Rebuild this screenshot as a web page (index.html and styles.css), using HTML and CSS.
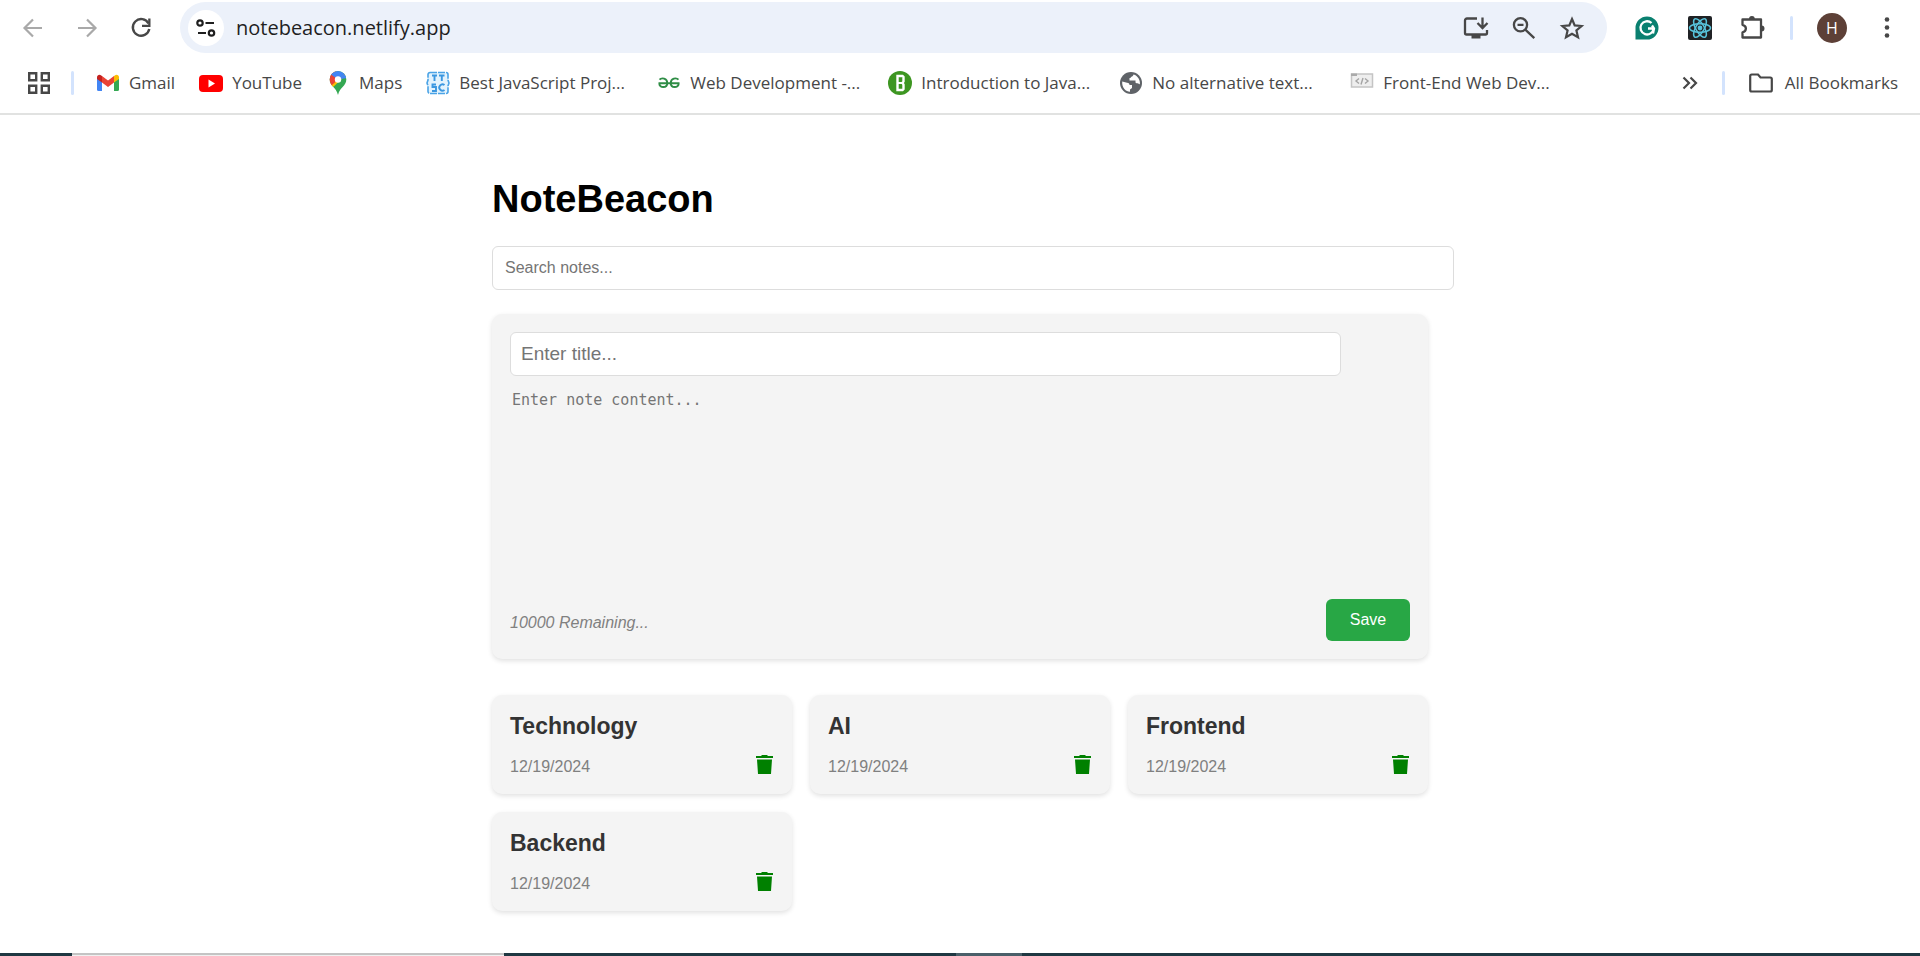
FILE: index.html
```html
<!DOCTYPE html>
<html lang="en">
<head>
<meta charset="utf-8">
<title>NoteBeacon</title>
<link rel="stylesheet" href="styles.css">
</head>
<body>
<header class="browser">
  <div class="toolbar">
    <nav class="nav-buttons" aria-label="Navigation">
      <button class="icon-btn icon-btn-muted" aria-label="Back"><svg class="icon-24" viewBox="0 0 24 24"><path d="M21 12H4M12 3.500L3.500 12l8.500 8.500" fill="none" stroke="currentColor" stroke-width="2.200"/></svg></button>
      <button class="icon-btn icon-btn-muted" aria-label="Forward"><svg class="icon-24" viewBox="0 0 24 24"><path d="M3 12h17M12 3.500l8.500 8.500-8.500 8.500" fill="none" stroke="currentColor" stroke-width="2.200"/></svg></button>
      <button class="icon-btn" aria-label="Reload"><svg class="icon-24" viewBox="0 0 24 24"><path d="M19.500 7.500A8.300 8.300 0 1 0 20.300 13" fill="none" stroke="currentColor" stroke-width="2.400"/><path d="M21.500 2.500v8.500H13v-2.300h6.200V2.500z" fill="currentColor"/></svg></button>
    </nav>
    <div class="omnibox">
      <button class="site-info" aria-label="Site information"><svg class="icon-24" viewBox="0 0 24 24"><g fill="none" stroke="currentColor" stroke-width="2.200"><circle cx="6" cy="7" r="2.700"/><path d="M11.500 7H20M4 17h8"/><circle cx="17.500" cy="17" r="2.700"/></g></svg></button>
      <input class="address" aria-label="Address" value="notebeacon.netlify.app">
      <div class="omnibox-actions">
        <button class="icon-btn" aria-label="Install app"><svg class="icon-26" viewBox="0 0 26 26"><g fill="none" stroke="currentColor" stroke-width="2.300"><path d="M14 3.500H4a2 2 0 0 0-2 2v12.500a1.500 1.500 0 0 0 1.500 1.500h19a1.500 1.500 0 0 0 1.500-1.500V15"/><path d="M19.500 2.500v10M14.500 8l5 5 5-5"/></g><path d="M8.500 19h9v4.500h-9z" fill="currentColor"/></svg></button>
        <button class="icon-btn" aria-label="Zoom"><svg class="icon-26" viewBox="0 0 26 26"><g fill="none" stroke="currentColor" stroke-width="2.300"><circle cx="9.500" cy="9.800" r="6.600"/><path d="M14.300 14.600l9 8.600M6.500 9.800h6"/></g></svg></button>
        <button class="icon-btn" aria-label="Bookmark this tab"><svg class="icon-26" viewBox="0 0 26 26"><path d="M13 4l2.700 6.400 6.900.6-5.200 4.500 1.600 6.800L13 18.700l-6 3.600 1.600-6.800L3.400 11l6.900-.6z" fill="none" stroke="currentColor" stroke-width="2.200"/></svg></button>
      </div>
    </div>
    <div class="extensions">
      <button class="icon-btn" aria-label="Grammarly"><svg class="icon-26" viewBox="0 0 26 26"><path d="M13 1.500A11.500 11.500 0 0 0 1.500 13v11.500H13a11.500 11.500 0 0 0 0-23z" fill="#0a8070"/><path d="M17.500 8A6.600 6.600 0 1 0 19.600 13.500H14M18 10.500l2 3-1 5" fill="none" stroke="#fff" stroke-width="2.300"/></svg></button>
      <button class="icon-btn" aria-label="React Developer Tools"><svg class="icon-26" viewBox="0 0 26 26"><rect x="1" y="1" width="24" height="24" rx="2" fill="#202225"/><g fill="none" stroke="#58c4dc" stroke-width="1.500"><ellipse cx="13" cy="13" rx="10.500" ry="4.200"/><ellipse cx="13" cy="13" rx="10.500" ry="4.200" transform="rotate(60 13 13)"/><ellipse cx="13" cy="13" rx="10.500" ry="4.200" transform="rotate(120 13 13)"/></g><circle cx="13" cy="13" r="2.400" fill="#58c4dc"/></svg></button>
      <button class="icon-btn" aria-label="Extensions"><svg class="icon-26" viewBox="0 0 26 26"><path d="M2.500 4.500h18.500V22.500H2.500v-5.200c4.500-1 4.500-6.500 0-7.500z" fill="none" stroke="currentColor" stroke-width="2.300" stroke-linejoin="round"/><path d="M9 4a2.900 2.900 0 0 1 5.800 0zM21.500 10.500a3 3 0 0 1 0 6z" fill="currentColor"/></svg></button>
      <span class="divider"></span>
      <button class="avatar" aria-label="Profile">H</button>
      <button class="icon-btn menu-btn" aria-label="Menu"><svg class="icon-26" viewBox="0 0 26 26"><g fill="currentColor"><circle cx="13" cy="4.500" r="2.300"/><circle cx="13" cy="12.500" r="2.300"/><circle cx="13" cy="20.500" r="2.300"/></g></svg></button>
    </div>
  </div>
  <nav class="bookmarks" aria-label="Bookmarks">
    <button class="icon-btn" aria-label="Apps"><svg class="icon-24" viewBox="0 0 24 24"><path d="M2.200 2.200h7v7h-7zM14.800 2.200h7v7h-7zM2.200 14.800h7v7h-7zM14.800 14.800h7v7h-7z" fill="none" stroke="currentColor" stroke-width="2.400"/></svg></button>
    <span class="divider"></span>
    <div class="bookmark-list">
      <a class="bookmark" href="#"><svg class="icon-24" viewBox="0 0 24 24"><path d="M1 6v12.500a1.500 1.500 0 0 0 1.500 1.500H6v-9z" fill="#4285f4"/><path d="M18 11v9h3.500a1.500 1.500 0 0 0 1.500-1.500V6z" fill="#34a853"/><path d="M6 5l6 4.500L18 5v6.500L12 16l-6-4.500z" fill="#ea4335"/><path d="M1 6.500C1 4 3.500 3.200 5.200 4.400L6 5v6.500L1 8z" fill="#c5221f"/><path d="M23 6.500c0-2.500-2.500-3.300-4.200-2.100L18 5v6.500L23 8z" fill="#fbbc04"/></svg><span>Gmail</span></a>
      <a class="bookmark" href="#"><svg class="icon-24" viewBox="0 0 24 24"><rect y="4" width="24" height="17" rx="4" fill="#f00"/><path d="M9.500 8.500l6.500 4-6.500 4z" fill="#fff"/></svg><span>YouTube</span></a>
      <a class="bookmark" href="#"><svg class="icon-24" viewBox="0 0 24 24"><defs><clipPath id="pin"><path d="M12 0a8.300 8.300 0 0 0-8.300 8.500C3.700 15 10 16 12 24c2-8 8.300-9 8.300-15.500A8.300 8.300 0 0 0 12 0z"/></clipPath></defs><g clip-path="url(#pin)"><path d="M0 0h24v24H0z" fill="#34a853"/><path d="M12 8.500L21 0v3L4 19 1 14z" fill="#fbbc04"/><path d="M0 0h10l2 8.500-7 6.500L0 12z" fill="#ea4335"/><path d="M5 3.500L12 8.500 20 1V0H5z" fill="#4285f4"/><path d="M12 8.500L18.500 2 21 7l-9 1.500z" fill="#4285f4"/></g><circle cx="12" cy="8.500" r="3.200" fill="#fff"/></svg><span>Maps</span></a>
      <a class="bookmark bookmark-long" href="#"><svg class="icon-24" viewBox="0 0 24 24"><path d="M4 1.500h16a2 2 0 0 1 2 2V9l1 3-1 3v5.500a2 2 0 0 1-2 2H4a2 2 0 0 1-2-2V15l-1-3 1-3V3.500a2 2 0 0 1 2-2z" fill="#e3f3fd" stroke="#4aa3e6" stroke-width="1.600" stroke-dasharray="7 1"/><path d="M6 4.500h5M8.500 4.500V10M13 4.500h5.500M15.800 4.500V10M10 13.500H6.500V16H10v4H6M18.500 14a3.200 3.200 0 1 0 0 5" fill="none" stroke="#3b97e0" stroke-width="1.900"/></svg><span>Best JavaScript Proj...</span></a>
      <a class="bookmark bookmark-long" href="#"><svg class="icon-24" viewBox="0 0 24 24"><g fill="none" stroke="#2f8d46" stroke-width="1.900"><path d="M2.500 8.700c2-2.200 7.800-1.800 7.800 3.500 0 5-8 5-8 .3M21.500 8.700c-2-2.200-7.800-1.800-7.800 3.500 0 5 8 5 8 .3M1.500 12.300h21"/></g></svg><span>Web Development -...</span></a>
      <a class="bookmark bookmark-long" href="#"><svg class="icon-24" viewBox="0 0 24 24"><circle cx="12" cy="12" r="12" fill="#3d9621"/><path d="M9.500 5h5l1 1v4.500l-1 1.500 1 1.500V18l-1 1h-5z" fill="none" stroke="#fff" stroke-width="2.400"/><path d="M10 12h4" stroke="#fff" stroke-width="2"/></svg><span>Introduction to Java...</span></a>
      <a class="bookmark bookmark-long" href="#"><svg class="icon-24" viewBox="0 0 24 24"><circle cx="12" cy="12" r="11" fill="#5f6368"/><path d="M3.200 10.500l4.800 1.200c2 .3 2.500 1 2.500 2.300h2.500v3l-2 1.500v2.300c-4 0-8.300-4-7.800-10.300zM14.500 3.500c-.5 2.500-2.500 1.500-3 3.500h-1v2.500h6v2c0 1 3.500.5 4.300 2 .8-4-1.800-8.800-6.300-10z" fill="#fff"/></svg><span>No alternative text...</span></a>
      <a class="bookmark bookmark-long" href="#"><svg class="icon-24" viewBox="0 0 24 24"><rect x="1.500" y="3" width="21" height="13" fill="#eee" stroke="#c4c4c4" stroke-width="1.500"/><path d="M1 2.500h6v2.500H1z" fill="#aaa"/><path d="M9 7.500L6 10l3 2.500M15 7.500l3 2.500-3 2.500M13 7l-2 6.500" fill="none" stroke="#a4a4a4" stroke-width="1.400"/></svg><span>Front-End Web Dev...</span></a>
    </div>
    <button class="icon-btn" aria-label="More bookmarks"><svg class="icon-24" viewBox="0 0 24 24"><path d="M5.500 6.500L11 12l-5.500 5.500M12.500 6.500L18 12l-5.500 5.500" fill="none" stroke="currentColor" stroke-width="2.200"/></svg></button>
    <span class="divider"></span>
    <a class="bookmark bookmark-all" href="#"><svg class="icon-24" viewBox="0 0 24 24"><path d="M1.200 5a1.500 1.500 0 0 1 1.500-1.500H9l2.500 3h9.800a1.500 1.500 0 0 1 1.500 1.500v11a1.500 1.500 0 0 1-1.500 1.500H2.700A1.500 1.500 0 0 1 1.200 19z" fill="none" stroke="currentColor" stroke-width="2.200"/></svg><span>All Bookmarks</span></a>
  </nav>
</header>

<main class="container">
  <h1 class="app-title">NoteBeacon</h1>
  <input class="search" type="search" aria-label="Search notes" placeholder="Search notes...">
  <form class="editor">
    <input class="editor-title" type="text" aria-label="Title" placeholder="Enter title...">
    <textarea class="editor-content" aria-label="Note content" placeholder="Enter note content..."></textarea>
    <div class="editor-footer">
      <span class="remaining">10000 Remaining...</span>
      <button class="save" type="button">Save</button>
    </div>
  </form>
  <section class="notes" aria-label="Notes">
    <article class="note"><h2 class="note-title">Technology</h2><div class="note-footer"><time>12/19/2024</time><button class="delete" aria-label="Delete"><svg class="trash" viewBox="0 0 18 20"><path d="M0 4V2h5l1-1h5l1 1h5v2zM1 5.500h15L15 20H2z" fill="currentColor"/></svg></button></div></article>
    <article class="note"><h2 class="note-title">AI</h2><div class="note-footer"><time>12/19/2024</time><button class="delete" aria-label="Delete"><svg class="trash" viewBox="0 0 18 20"><path d="M0 4V2h5l1-1h5l1 1h5v2zM1 5.500h15L15 20H2z" fill="currentColor"/></svg></button></div></article>
    <article class="note"><h2 class="note-title">Frontend</h2><div class="note-footer"><time>12/19/2024</time><button class="delete" aria-label="Delete"><svg class="trash" viewBox="0 0 18 20"><path d="M0 4V2h5l1-1h5l1 1h5v2zM1 5.500h15L15 20H2z" fill="currentColor"/></svg></button></div></article>
    <article class="note"><h2 class="note-title">Backend</h2><div class="note-footer"><time>12/19/2024</time><button class="delete" aria-label="Delete"><svg class="trash" viewBox="0 0 18 20"><path d="M0 4V2h5l1-1h5l1 1h5v2zM1 5.500h15L15 20H2z" fill="currentColor"/></svg></button></div></article>
  </section>
</main>

<footer class="taskbar"><span class="taskbar-gap"></span><span class="taskbar-search"></span><span class="taskbar-space"></span><span class="taskbar-active"></span></footer>
</body>
</html>
```
FILE: styles.css
```css
* { box-sizing: border-box; }

body {
  margin: 0;
  min-height: 100vh;
  display: flex;
  flex-direction: column;
  background: #fff;
  font-family: "Liberation Sans", Arial, sans-serif;
  font-size: 16px;
}

button, input, textarea { font: inherit; }
button { border: 0; padding: 0; background: none; color: inherit; cursor: pointer; }
svg { display: block; }

/* Browser chrome */
.browser {
  border-bottom: 2px solid #e1e2e1;
  color: #474747;
  font-family: "Open Sans", "Noto Sans", sans-serif;
}
.toolbar {
  display: flex;
  align-items: center;
  padding: 2px 20px 0 21px;
}
.nav-buttons { display: flex; gap: 30px; margin-right: 27px; }
.icon-btn { flex: none; color: #474747; }
.icon-btn-muted { color: #a9a9a9; }
.icon-24 { width: 24px; height: 24px; flex: none; }
.icon-26 { width: 26px; height: 26px; flex: none; }

.omnibox {
  flex: 1;
  display: flex;
  align-items: center;
  height: 51px;
  padding: 0 22px 0 8px;
  border-radius: 26px;
  background: #ecf1fa;
}
.site-info {
  display: grid;
  place-items: center;
  width: 36px;
  height: 36px;
  border-radius: 50%;
  background: #fff;
  color: #1f1f1f;
}
.address {
  flex: 1;
  min-width: 0;
  border: 0;
  padding: 0 0 0 12px;
  background: none;
  color: #1f1f1f;
  font-size: 20px;
}
.omnibox-actions { display: flex; gap: 22px; }
.extensions { display: flex; align-items: center; gap: 27px; padding-left: 27px; }
.extensions .divider { margin: 0 -3px; }
.divider { flex: none; width: 3px; height: 24px; border-radius: 2px; background: #d3e3fd; }
.avatar {
  width: 30px;
  height: 30px;
  border-radius: 50%;
  background: #5d4037;
  color: #fff;
  font-size: 16px;
  line-height: 30px;
}

.bookmarks {
  display: flex;
  align-items: center;
  height: 60px;
  padding: 0 22px 0 27px;
  gap: 20px;
}
.bookmark-list { flex: 1; display: flex; gap: 24px; min-width: 0; padding-left: 2px; overflow: hidden; }
.bookmark {
  display: flex;
  align-items: center;
  gap: 9px;
  color: #474747;
  font-size: 17px;
  line-height: 24px;
  text-decoration: none;
  white-space: nowrap;
}
.bookmark-long { width: 207px; flex: none; }
.bookmark-all { gap: 12px; padding-left: 4px; }

/* Notes app */
.container {
  width: 100%;
  max-width: 936px;
  margin: 0 auto;
  padding: 61px 0 42px;
}
.app-title { margin: 0 0 24px; font-size: 38px; line-height: 46px; color: #000; }
.search {
  display: block;
  width: calc(100% + 26px);
  height: 44px;
  margin-bottom: 24px;
  padding: 0 12px;
  border: 1px solid #ddd;
  border-radius: 6px;
  appearance: none;
}
.search::placeholder, .editor-title::placeholder, .editor-content::placeholder { color: #757575; opacity: 1; }
.editor, .note {
  border-radius: 10px;
  background: #f4f4f4;
  box-shadow: 0 2px 5px rgba(0, 0, 0, 0.12);
}
.editor { padding: 18px; margin-bottom: 36px; }
.editor-title {
  display: block;
  width: calc(100% - 69px);
  height: 44px;
  padding: 0 10px;
  border: 1px solid #ddd;
  border-radius: 6px;
  font-size: 19px;
}
.editor-content {
  display: block;
  width: 100%;
  height: 205px;
  margin-top: 12px;
  margin-bottom: 6px;
  padding: 3px 2px;
  border: 0;
  background: none;
  resize: none;
  font-family: "DejaVu Sans Mono", monospace;
  font-size: 15px;
  line-height: 18px;
}
.editor-footer { display: flex; justify-content: space-between; align-items: center; }
.remaining { color: #808080; font-style: italic; padding-top: 6px; }
.save {
  width: 84px;
  height: 42px;
  border-radius: 6px;
  background: #28a745;
  color: #fff;
}

.notes { display: grid; grid-template-columns: repeat(3, 1fr); gap: 18px; }
.note { padding: 18px; }
.note-title { margin: 0 0 12px; font-size: 23px; line-height: 26px; color: #333; }
.note-footer { display: flex; justify-content: space-between; align-items: center; height: 25px; }
.note-footer time { color: #808080; padding-top: 6px; }
.delete { color: #008000; }
.trash { width: 18px; height: 20px; }

.taskbar { display: flex; height: 3px; margin-top: auto; background: #1f3842; }
.taskbar-gap { width: 72px; }
.taskbar-search { width: 432px; background: #f0f0f0; border-top: 2px solid #c4c4c4; }
.taskbar-space { width: 452px; }
.taskbar-active { width: 66px; background: #4a5f69; }
```
